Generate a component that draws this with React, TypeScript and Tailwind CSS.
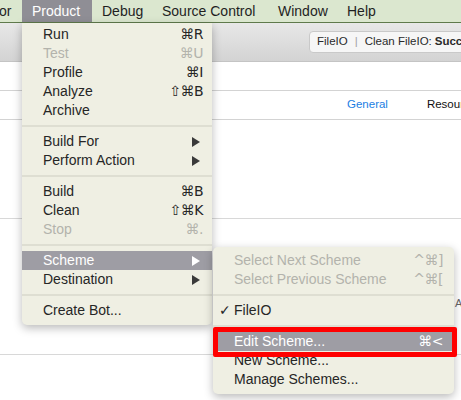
import React from "react";

type Item =
  | { sep: true }
  | {
      sep?: false;
      label: string;
      sc?: string;
      disabled?: boolean;
      arrow?: boolean;
      hl?: boolean;
      check?: boolean;
    };

const Arrow = ({ white }: { white?: boolean }) => (
  <svg width="8" height="10" viewBox="0 0 8 10" className="block">
    <path d="M0 0 L8 5 L0 10 Z" fill={white ? "#ffffff" : "#3a3a3a"} />
  </svg>
);

function Row({ it, pl, pr }: { it: Item; pl: string; pr: string }) {
  if (it.sep) {
    return (
      <div className="h-[12px] flex items-center">
        <div className="h-[2px] w-full bg-[#deded2]" />
      </div>
    );
  }
  const color = it.hl
    ? "text-white bg-[#9e9da4]"
    : it.disabled
    ? "text-[#b3b3ac]"
    : "text-[#262626]";
  return (
    <div className={`relative h-[19px] flex items-center justify-between ${pl} ${pr} ${color}`}>
      {it.check && (
        <span className="absolute left-[6px] top-0 h-[19px] flex items-center text-[14px] [font-family:'DejaVu_Sans',sans-serif]">
          ✓
        </span>
      )}
      <span className="text-[14px] leading-[19px] whitespace-nowrap">{it.label}</span>
      {it.arrow ? (
        <span className="mr-[3px]">
          <Arrow white={it.hl} />
        </span>
      ) : it.sc ? (
        <span className="text-[14px] leading-[19px] whitespace-nowrap [font-family:'DejaVu_Sans','Liberation_Sans',sans-serif] tracking-[-0.5px]">
          {it.sc}
        </span>
      ) : null}
    </div>
  );
}

const mainItems: Item[] = [
  { label: "Run", sc: "⌘R" },
  { label: "Test", sc: "⌘U", disabled: true },
  { label: "Profile", sc: "⌘I" },
  { label: "Analyze", sc: "⇧⌘B" },
  { label: "Archive" },
  { sep: true },
  { label: "Build For", arrow: true },
  { label: "Perform Action", arrow: true },
  { sep: true },
  { label: "Build", sc: "⌘B" },
  { label: "Clean", sc: "⇧⌘K" },
  { label: "Stop", sc: "⌘.", disabled: true },
  { sep: true },
  { label: "Scheme", arrow: true, hl: true },
  { label: "Destination", arrow: true },
  { sep: true },
  { label: "Create Bot..." },
];

const subItems: Item[] = [
  { label: "Select Next Scheme", sc: "^⌘]", disabled: true },
  { label: "Select Previous Scheme", sc: "^⌘[", disabled: true },
  { sep: true },
  { label: "FileIO", check: true },
  { sep: true },
  { label: "Edit Scheme...", sc: "⌘<", hl: true },
  { label: "New Scheme..." },
  { label: "Manage Schemes..." },
];

export default function App() {
  return (
    <div className="relative w-[461px] h-[400px] overflow-hidden bg-white [font-family:'Liberation_Sans',Arial,sans-serif]">
      {/* menubar */}
      <div className="h-[23px] bg-[#dbe7cf] border-b border-[#5f7a4c] flex items-stretch text-[14px] text-[#1f1f1f]">
        <div className="w-[22px] flex items-center overflow-hidden">
          <span className="-ml-[1px]">or</span>
        </div>
        <div className="w-[70px] pl-[10px] flex items-center bg-[#8f8e95] text-white">Product</div>
        <div className="w-[60px] pl-[10px] flex items-center">Debug</div>
        <div className="w-[116px] pl-[10px] flex items-center whitespace-nowrap">Source Control</div>
        <div className="w-[69px] pl-[10px] flex items-center">Window</div>
        <div className="pl-[10px] flex items-center">Help</div>
      </div>
      {/* toolbar */}
      <div className="h-[39px] bg-gradient-to-b from-[#e8e8e8] to-[#d3d3d3] border-b border-[#c4c4c4] flex items-start pl-[309px] pt-[8px]">
        <div className="shrink-0 w-[220px] h-[22px] rounded-[4px] bg-[#f6f6f6] border border-[#c9c9c9] flex items-center pl-[7px] text-[11.5px] text-[#2a2a2a] whitespace-nowrap">
          <span>FileIO</span>
          <span className="mx-[7px] text-[#a0a0a0]">|</span>
          <span>Clean FileIO: </span>
          <span className="font-bold ml-[3px]">Succeeded</span>
        </div>
      </div>
      {/* content */}
      <div className="h-[28px]" />
      <div className="h-[1px] bg-[#d3d3d3]" />
      <div className="h-[28px] flex items-center text-[11.5px] whitespace-nowrap">
        <span className="ml-[347px] text-[#1b7ee3]">General</span>
        <span className="ml-[39px] text-[#111]">Resources</span>
      </div>
      <div className="h-[1px] bg-[#d3d3d3]" />
      <div className="h-[98px]" />
      <div className="h-[1px] bg-[#d8d8d8]" />
      <div className="h-[135px] relative">
        <span className="absolute left-[455px] top-[76px] text-[11px] text-[#666]">A</span>
      </div>
      <div className="h-[1px] bg-[#d8d8d8]" />

      {/* Product menu */}
      <div className="absolute left-[22px] top-[23px] w-[190px] pt-[2px] pb-[5px] bg-[#efefe3] rounded-b-[5px] shadow-[0_3px_10px_rgba(0,0,0,0.28)]">
        {mainItems.map((it, i) => (
          <Row key={i} it={it} pl="pl-[21px]" pr="pr-[9px]" />
        ))}
      </div>

      {/* Scheme submenu */}
      <div className="absolute left-[213px] top-[247px] w-[241px] pt-[4px] pb-[5px] bg-[#efefe3] rounded-[5px] shadow-[0_3px_10px_rgba(0,0,0,0.28)]">
        {subItems.map((it, i) => (
          <Row key={i} it={it} pl="pl-[21px]" pr="pr-[11px]" />
        ))}
      </div>

      {/* red highlight box */}
      <div className="absolute left-[213px] top-[327px] w-[244px] h-[30px] border-[5px] border-[#ff0000] rounded-[2px]" />
    </div>
  );
}
